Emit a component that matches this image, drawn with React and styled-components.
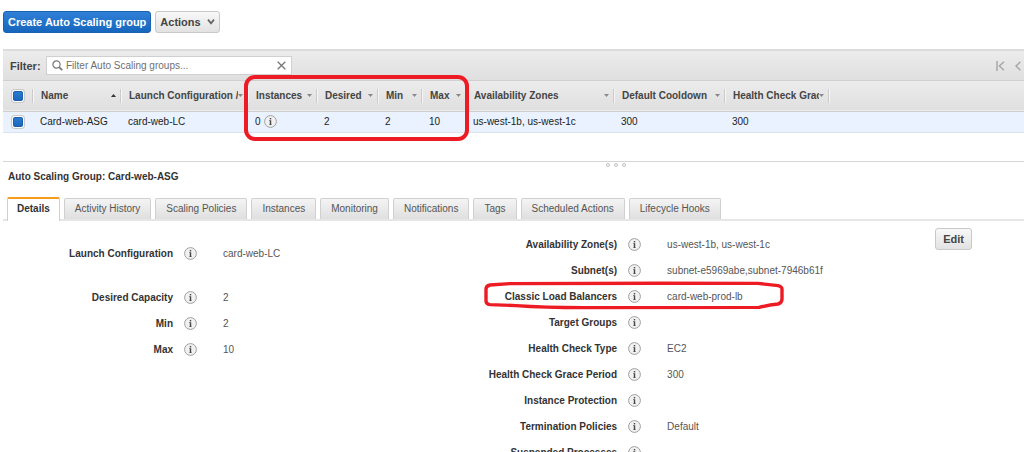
import React from "react";
import styled, { createGlobalStyle, css } from "styled-components";

const Global = createGlobalStyle`
  *, *::before, *::after { box-sizing: border-box; }
  html { scrollbar-width: none; }
  body { margin: 0; background: #fff; color: #333; }
  body, button, input { font-family: "Liberation Sans", Arial, sans-serif; font-size: 10px; }
`;

const Page = styled.main`
  position: relative;
  padding: 11px 0 0 3px;
`;

const Toolbar = styled.div`
  display: flex;
  gap: 4px;
  padding-bottom: 16px;
`;

const Button = styled.button`
  display: inline-flex;
  align-items: center;
  justify-content: center;
  gap: 6px;
  height: 22px;
  padding: 0 ${(p) => (p.$tight ? 4 : 7)}px;
  border: 1px solid #c9c9c9;
  border-radius: 3px;
  background: linear-gradient(#f8f8f8, #e2e2e2);
  color: #444;
  font-size: 11px;
  font-weight: bold;
  white-space: nowrap;
  ${(p) =>
    p.$primary &&
    css`
      border-color: #1a61b0;
      background: linear-gradient(#2f80d6, #1666bd);
      color: #fff;
    `}
`;

const FilterBar = styled.div`
  display: flex;
  align-items: center;
  height: 32px;
  padding: 0 3px 0 7px;
  border-top: 2px solid #dcdcdc;
  border-bottom: 1px solid #d0d0d0;
  background: linear-gradient(#ececec, #dfdfdf);
`;

const FilterLabel = styled.label`
  width: 36px;
  color: #444;
  font-size: 11px;
  font-weight: bold;
`;

const SearchBox = styled.div`
  display: flex;
  align-items: center;
  gap: 3px;
  width: 246px;
  height: 19px;
  padding: 0 5px;
  border: 1px solid #d0d0d0;
  background: #fff;
`;

const SearchInput = styled.input`
  flex: 1;
  min-width: 0;
  padding: 0;
  border: 0;
  outline: 0;
  background: none;
  color: #333;
  &::placeholder { color: #707070; opacity: 1; }
`;

const IconButton = styled.button`
  display: flex;
  padding: 0;
  border: 0;
  background: none;
`;

const Pager = styled.nav`
  display: flex;
  gap: 10px;
  margin-left: auto;
`;

const Table = styled.table`
  width: 100%;
  table-layout: fixed;
  border-collapse: collapse;
`;

const Col = styled.col`
  width: ${(p) => (p.$width ? `${p.$width}px` : "auto")};
`;

const HeadRow = styled.tr`
  height: 30px;
  border-bottom: 1px solid #cfcfcf;
  background: linear-gradient(#ececec, #dfdfdf);
`;

const BodyRow = styled.tr`
  height: 21px;
  border-bottom: 1px solid #dde3ec;
  background: #e9f2fe;
`;

const Th = styled.th`
  padding: 0;
  color: #444;
  text-align: left;
`;

const HeadCell = styled.div`
  display: flex;
  align-items: center;
  height: 14px;
  padding: 0 4px 0 8px;
  border-left: 1px solid #cbcbcb;
  box-shadow: inset 1px 0 #f6f6f6;
`;

const HeadText = styled.span`
  flex: 1;
  min-width: 0;
  overflow: hidden;
  white-space: nowrap;
`;

const Td = styled.td`
  padding: 0 0 0 8px;
  color: #222;
  white-space: nowrap;
`;

const InlineValue = styled.span`
  display: flex;
  align-items: center;
  gap: 3px;
`;

const Tick = styled.input`
  display: block;
  appearance: none;
  width: 10px;
  height: 10px;
  margin: 0 0 0 10px;
  border-radius: 2px;
  background: #fff;
  box-shadow: 0 0 0 1px #fff, 0 0 0 2px #c8c8c8;
  &:checked {
    border: 1px solid #1a5fae;
    background: linear-gradient(#2a7ad0, #1b68be);
  }
`;

const CheckCell = styled.td`
  padding: 0;
`;

const Splitter = styled.div`
  display: flex;
  justify-content: center;
  gap: 4px;
  height: 10px;
  margin-top: 28px;
  padding: 1px 0 0 205px;
  border-top: 1px solid #d6d6d6;
`;

const Grip = styled.span`
  width: 4px;
  height: 4px;
  border: 1px solid #c0c0c0;
  border-radius: 50%;
`;

const Title = styled.h1`
  margin: 0;
  padding: 0 5px;
  color: #333;
  font-size: 10px;
  line-height: 12px;
`;

const Tabs = styled.div`
  display: flex;
  align-items: flex-end;
  gap: 4px;
  margin-top: 14px;
  padding: 0 4px;
  border-bottom: 2px solid #e6e6e6;
`;

const Tab = styled.button`
  height: 21px;
  padding: 0 10px;
  border: 1px solid #d0d0d0;
  border-bottom: 0;
  border-radius: 2px 2px 0 0;
  background: linear-gradient(#f4f4f4, #dfdfdf);
  color: #555;
  white-space: nowrap;
  ${(p) =>
    p.$active &&
    css`
      height: 24px;
      margin-bottom: -2px;
      padding: 0 9px 2px;
      border-top: 2px solid #f79b1c;
      background: #fff;
      color: #333;
      font-weight: bold;
    `}
`;

const Panel = styled.section`
  display: grid;
  grid-template-columns: 444fr 488fr auto;
  align-items: start;
  padding: 7px 52px 0 0;
`;

const Details = styled.dl`
  margin: 0;
  padding-top: ${(p) => (p.$inset ? 13 : 4)}px;
`;

const Detail = styled.div`
  position: relative;
  display: grid;
  grid-template-columns: 170px 13px 1fr;
  column-gap: 11px;
  align-items: center;
  height: 26px;
  margin-bottom: ${(p) => (p.$gapAfter ? 18 : 0)}px;
`;

const Term = styled.dt`
  color: #333;
  font-weight: bold;
  text-align: right;
  white-space: nowrap;
`;

const Value = styled.dd`
  margin: 0;
  padding-left: 15px;
  color: #555;
  white-space: nowrap;
`;

const TableMark = styled.div`
  position: absolute;
  top: 75px;
  left: 244px;
  width: 225px;
  height: 66px;
  border: 4px solid #ed1c24;
  border-radius: 11px;
  pointer-events: none;
`;

const RowMark = styled.svg`
  position: absolute;
  top: -3px;
  left: 37px;
  pointer-events: none;
`;

const InfoIcon = () => (
  <svg width="13" height="13" viewBox="0 0 13 13" role="img" aria-label="Info">
    <circle cx="6.5" cy="6.5" r="5.9" fill="#f1f1f1" stroke="#a0a0a0" />
    <rect x="5.8" y="3" width="1.4" height="1.4" fill="#444" />
    <path d="M5.2 5.3H7.2V9.4H7.8V10H5.2V9.4H5.8V5.9H5.2Z" fill="#444" />
  </svg>
);

const SearchIcon = () => (
  <svg width="11" height="11" viewBox="0 0 11 11" fill="none" stroke="#777">
    <circle cx="4.5" cy="4.5" r="3.6" strokeWidth="1.2" />
    <path d="M7.2 7.2L10.2 10.2" strokeWidth="1.8" />
  </svg>
);

const ClearIcon = () => (
  <svg width="9" height="9" viewBox="0 0 9 9" stroke="#777" strokeWidth="1.3">
    <path d="M.7 .7L8.3 8.3M8.3 .7L.7 8.3" />
  </svg>
);

const ChevronDown = () => (
  <svg width="8" height="6" viewBox="0 0 8 6" fill="none" stroke="#666" strokeWidth="1.8">
    <path d="M1 .6L4 4.4L7 .6" />
  </svg>
);

const FirstIcon = () => (
  <svg width="9" height="10" viewBox="0 0 9 10" fill="none" stroke="#a8a8a8" strokeWidth="1.5">
    <path d="M1 0V10M8 .8L3.4 5L8 9.2" />
  </svg>
);

const PrevIcon = () => (
  <svg width="6" height="10" viewBox="0 0 6 10" fill="none" stroke="#a8a8a8" strokeWidth="1.5">
    <path d="M5.4 .8L1 5L5.4 9.2" />
  </svg>
);

const SortIcon = ({ up }) => (
  <svg width="5" height="3" viewBox="0 0 5 3" fill={up ? "#333" : "#888"}>
    <path d={up ? "M0 3L2.5 0L5 3Z" : "M0 0H5L2.5 3Z"} />
  </svg>
);

const columns = [
  { name: "Name", width: 88, up: true },
  { name: "Launch Configuration /", width: 127 },
  { name: "Instances", width: 69 },
  { name: "Desired", width: 61 },
  { name: "Min", width: 44 },
  { name: "Max", width: 44 },
  { name: "Availability Zones", width: 148 },
  { name: "Default Cooldown", width: 111 },
  { name: "Health Check Grace Period", width: 104 },
];

const tabs = [
  "Details",
  "Activity History",
  "Scaling Policies",
  "Instances",
  "Monitoring",
  "Notifications",
  "Tags",
  "Scheduled Actions",
  "Lifecycle Hooks",
];

const capacity = [
  { term: "Launch Configuration", value: "card-web-LC", gapAfter: true },
  { term: "Desired Capacity", value: "2" },
  { term: "Min", value: "2" },
  { term: "Max", value: "10" },
];

const settings = [
  { term: "Availability Zone(s)", value: "us-west-1b, us-west-1c" },
  { term: "Subnet(s)", value: "subnet-e5969abe,subnet-7946b61f" },
  { term: "Classic Load Balancers", value: "card-web-prod-lb", marked: true },
  { term: "Target Groups", value: "" },
  { term: "Health Check Type", value: "EC2" },
  { term: "Health Check Grace Period", value: "300" },
  { term: "Instance Protection", value: "" },
  { term: "Termination Policies", value: "Default" },
  { term: "Suspended Processes", value: "" },
];

const DetailList = ({ items, inset }) => (
  <Details $inset={inset}>
    {items.map((d) => (
      <Detail key={d.term} $gapAfter={d.gapAfter}>
        <Term>{d.term}</Term>
        <InfoIcon />
        <Value>{d.value}</Value>
        {d.marked && (
          <RowMark width="300" height="29" viewBox="0 0 300 29" fill="none" stroke="#ed1c24" strokeWidth="3.4">
            <path d="M26 2.6L6 4Q2 5 2 8V20Q2 23 6 23.6L32 24.6Q60 26.6 100 26.6L275 26.4Q285 24 294 23Q298 22 298 18V8Q298 5 292 4.4L274 2.4Q150 2 26 2.6Z" />
          </RowMark>
        )}
      </Detail>
    ))}
  </Details>
);

export default function App() {
  return (
    <>
      <Global />
      <Page>
        <Toolbar>
          <Button type="button" $primary $tight>Create Auto Scaling group</Button>
          <Button type="button" $tight>
            Actions <ChevronDown />
          </Button>
        </Toolbar>

        <FilterBar>
          <FilterLabel htmlFor="filter">Filter:</FilterLabel>
          <SearchBox>
            <SearchIcon />
            <SearchInput id="filter" type="text" placeholder="Filter Auto Scaling groups..." />
            <IconButton type="button" aria-label="Clear filter"><ClearIcon /></IconButton>
          </SearchBox>
          <Pager aria-label="Pages">
            <IconButton type="button" aria-label="First page"><FirstIcon /></IconButton>
            <IconButton type="button" aria-label="Previous page"><PrevIcon /></IconButton>
          </Pager>
        </FilterBar>

        <Table>
          <colgroup>
            <Col $width={29} />
            {columns.map((c) => <Col key={c.name} $width={c.width} />)}
            <Col />
          </colgroup>
          <thead>
            <HeadRow>
              <Th scope="col"><Tick type="checkbox" defaultChecked aria-label="Select all" /></Th>
              {columns.map((c) => (
                <Th key={c.name} scope="col">
                  <HeadCell>
                    <HeadText>{c.name}</HeadText>
                    <SortIcon up={c.up} />
                  </HeadCell>
                </Th>
              ))}
              <Th><HeadCell /></Th>
            </HeadRow>
          </thead>
          <tbody>
            <BodyRow>
              <CheckCell><Tick type="checkbox" defaultChecked aria-label="Select Card-web-ASG" /></CheckCell>
              <Td>Card-web-ASG</Td>
              <Td>card-web-LC</Td>
              <Td><InlineValue>0 <InfoIcon /></InlineValue></Td>
              <Td>2</Td>
              <Td>2</Td>
              <Td>10</Td>
              <Td>us-west-1b, us-west-1c</Td>
              <Td>300</Td>
              <Td>300</Td>
              <Td />
            </BodyRow>
          </tbody>
        </Table>
        <TableMark />

        <Splitter><Grip /><Grip /><Grip /></Splitter>

        <Title>Auto Scaling Group: Card-web-ASG</Title>
        <Tabs role="tablist">
          {tabs.map((t, i) => (
            <Tab key={t} type="button" role="tab" aria-selected={i === 0} $active={i === 0}>{t}</Tab>
          ))}
        </Tabs>
        <Panel>
          <DetailList items={capacity} inset />
          <DetailList items={settings} />
          <Button type="button">Edit</Button>
        </Panel>
      </Page>
    </>
  );
}
